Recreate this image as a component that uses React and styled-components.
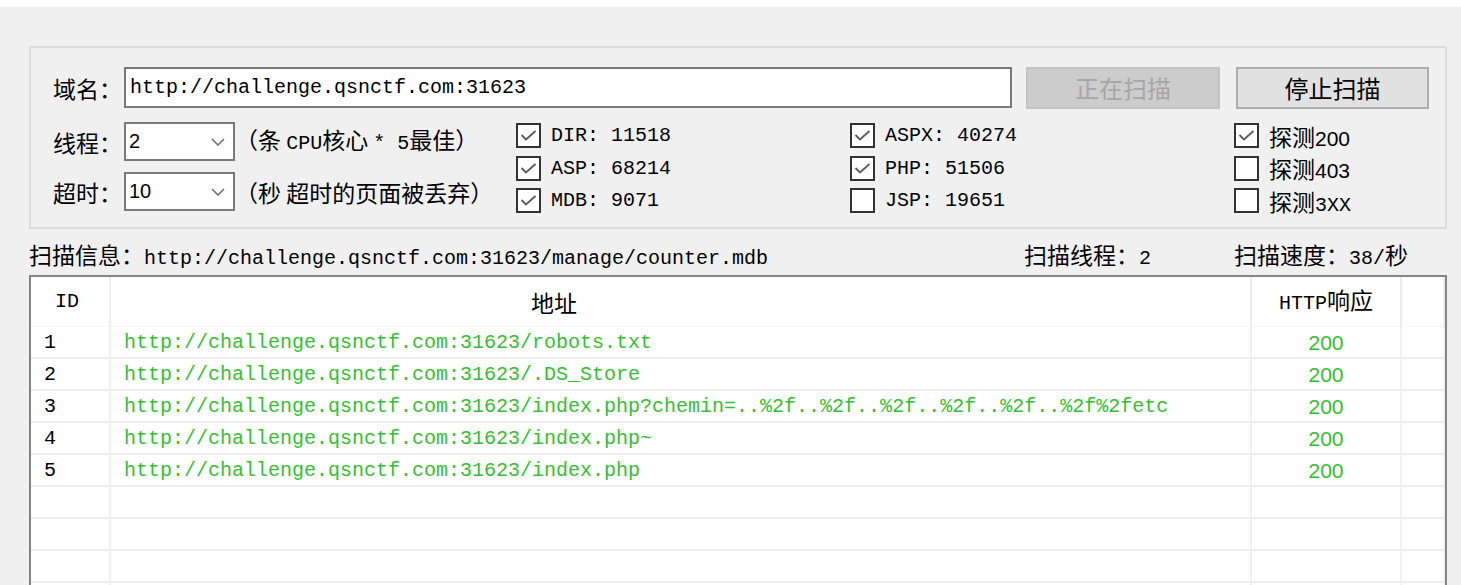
import styled, { createGlobalStyle } from "styled-components";

const GlobalStyle = createGlobalStyle`
  html, body {
    margin: 0;
    padding: 0;
    background: #f0f0f0;
  }
  body {
    font-family: "Liberation Mono", "Noto Sans CJK SC", monospace;
    font-size: 20px;
    color: #000;
  }
`;

const Window = styled.div`
  height: 585px;
  overflow: hidden;
  display: flex;
  flex-direction: column;
`;

const TitleStrip = styled.div`
  height: 7px;
  flex-shrink: 0;
  background: #fff;
`;

const Content = styled.div`
  flex: 1;
  display: flex;
  flex-direction: column;
  padding: 39px 14px 0 29px;
`;

const Zh = styled.span`
  font-family: "Noto Sans CJK SC", sans-serif;
  font-size: ${({ $size }) => $size || 23}px;
`;

const GroupBox = styled.div`
  border: 2px solid #dcdcdc;
  padding: 18px 16px 16px 22px;
  display: flex;
  flex-direction: column;
  gap: 13px;
`;

const TopRow = styled.div`
  display: flex;
  align-items: center;
  height: 43px;
`;

const Label = styled.span`
  width: 71px;
  flex-shrink: 0;
  font-family: "Noto Sans CJK SC", sans-serif;
  font-size: 23px;
  line-height: 30px;
  white-space: nowrap;
`;

const TextInput = styled.div`
  flex: 1;
  height: 41px;
  box-sizing: border-box;
  border: 2px solid #7a7a7a;
  background: #fff;
  padding-left: 4px;
  margin-right: 14px;
  display: flex;
  align-items: center;
`;

const Button = styled.div`
  width: ${({ $w }) => $w}px;
  height: 42px;
  box-sizing: border-box;
  display: flex;
  align-items: center;
  justify-content: center;
  font-family: "Noto Sans CJK SC", sans-serif;
  font-size: 24px;
  background: ${({ $disabled }) => ($disabled ? "#cccccc" : "#e1e1e1")};
  color: ${({ $disabled }) => ($disabled ? "#a6a6a6" : "#000")};
  border: 2px solid ${({ $disabled }) => ($disabled ? "#c4c4c4" : "#adadad")};
  margin-left: ${({ $ml }) => $ml || 0}px;
`;

const LowerBlock = styled.div`
  display: flex;
  height: 89px;
`;

const LeftCol = styled.div`
  width: 463px;
  flex-shrink: 0;
  display: flex;
  flex-direction: column;
  gap: 11px;
`;

const FieldRow = styled.div`
  display: flex;
  align-items: center;
  height: 39px;
`;

const Select = styled.div`
  width: 111px;
  height: 39px;
  box-sizing: border-box;
  border: 2px solid #7a7a7a;
  background: #fff;
  display: flex;
  align-items: center;
  justify-content: space-between;
  padding: 0 8px 0 3px;
  font-family: "Liberation Sans", sans-serif;
  font-size: 20px;
`;

const Hint = styled.span`
  white-space: nowrap;
  font-family: "Noto Sans CJK SC", sans-serif;
  font-size: 23px;
  line-height: 30px;
`;

const Latin = styled.span`
  font-family: "Liberation Mono", monospace;
  font-size: 20px;
`;

const Sans = styled.span`
  font-family: "Liberation Sans", sans-serif;
  font-size: 21px;
`;

const CheckCol = styled.div`
  width: ${({ $w }) => ($w ? `${$w}px` : "auto")};
  flex-shrink: 0;
  display: flex;
  flex-direction: column;
  gap: 7.5px;
  padding-top: 1px;
`;

const CheckItem = styled.div`
  display: flex;
  align-items: center;
  gap: 10px;
  height: 25px;
  white-space: nowrap;
`;

const Box = styled.span`
  width: 25px;
  height: 25px;
  box-sizing: border-box;
  border: 2px solid #333;
  background: #fff;
  display: flex;
  align-items: center;
  justify-content: center;
`;

const CheckText = styled.span`
  font-family: "Liberation Mono", monospace;
  font-size: 20px;
`;

const InfoRow = styled.div`
  display: flex;
  align-items: center;
  height: 46px;
  box-sizing: border-box;
  padding-top: 9px;
  line-height: 30px;
  white-space: nowrap;
`;

const InfoMain = styled.div`
  flex: 1;
`;

const InfoStat = styled.div`
  width: ${({ $w }) => $w}px;
`;

const Table = styled.div`
  flex: 1;
  border: 2px solid #858585;
  border-bottom: none;
  background: #fff;
  display: grid;
  grid-template-columns: 80px 1141px 150px 1fr;
  grid-auto-rows: 32px;
  grid-template-rows: 50px;
  align-content: start;
  line-height: 28px;
`;

const HeadCell = styled.div`
  display: flex;
  align-items: center;
  justify-content: ${({ $center }) => ($center ? "center" : "flex-start")};
  padding-left: ${({ $pl }) => $pl || 0}px;
  border-right: 2px solid #ececec;
  border-bottom: 1px solid #f4f4f4;
`;

const Cell = styled.div`
  display: flex;
  align-items: center;
  justify-content: ${({ $center }) => ($center ? "center" : "flex-start")};
  padding-left: ${({ $pl }) => $pl || 0}px;
  padding-top: 2px;
  border-right: 2px solid #f0f0f0;
  border-bottom: 2px solid #ededed;
  color: ${({ $green }) => ($green ? "#33bf33" : "#000")};
  font-family: ${({ $sans }) =>
    $sans ? '"Liberation Sans", sans-serif' : '"Liberation Mono", monospace'};
  font-size: ${({ $sans }) => ($sans ? 21 : 20)}px;
  white-space: nowrap;
`;

const Check = () => (
  <svg width="17" height="13" viewBox="0 0 17 13">
    <polyline
      points="1.5,6 6,10.5 15.5,2"
      fill="none"
      stroke="#5a5a5a"
      strokeWidth="1.8"
    />
  </svg>
);

const Chevron = () => (
  <svg width="14" height="8" viewBox="0 0 14 8">
    <polyline points="1,1 7,7 13,1" fill="none" stroke="#6a6a6a" strokeWidth="1.5" />
  </svg>
);

const CheckBox = ({ checked, children }) => (
  <CheckItem>
    <Box>{checked && <Check />}</Box>
    {children}
  </CheckItem>
);

const host = "http://challenge.qsnctf.com:31623";

const results = [
  { id: 1, url: `${host}/robots.txt`, code: 200 },
  { id: 2, url: `${host}/.DS_Store`, code: 200 },
  {
    id: 3,
    url: `${host}/index.php?chemin=..%2f..%2f..%2f..%2f..%2f..%2f%2fetc`,
    code: 200,
  },
  { id: 4, url: `${host}/index.php~`, code: 200 },
  { id: 5, url: `${host}/index.php`, code: 200 },
];

const emptyRows = [0, 1, 2, 3, 4];

export default function App() {
  return (
    <>
      <GlobalStyle />
      <Window>
        <TitleStrip />
        <Content>
          <GroupBox>
            <TopRow>
              <Label>域名：</Label>
              <TextInput>
                <Latin>{host}</Latin>
              </TextInput>
              <Button $w={194} $disabled>
                正在扫描
              </Button>
              <Button $w={193} $ml={16}>
                停止扫描
              </Button>
            </TopRow>
            <LowerBlock>
              <LeftCol>
                <FieldRow>
                  <Label>线程：</Label>
                  <Select>
                    <span>2</span>
                    <Chevron />
                  </Select>
                  <Hint>
                    （条 <Latin>CPU</Latin>核心 <Latin>* 5</Latin>最佳）
                  </Hint>
                </FieldRow>
                <FieldRow>
                  <Label>超时：</Label>
                  <Select>
                    <span>10</span>
                    <Chevron />
                  </Select>
                  <Hint>（秒 超时的页面被丢弃）</Hint>
                </FieldRow>
              </LeftCol>
              <CheckCol $w={334}>
                <CheckBox checked>
                  <CheckText>DIR: 11518</CheckText>
                </CheckBox>
                <CheckBox checked>
                  <CheckText>ASP: 68214</CheckText>
                </CheckBox>
                <CheckBox checked>
                  <CheckText>MDB: 9071</CheckText>
                </CheckBox>
              </CheckCol>
              <CheckCol $w={384}>
                <CheckBox checked>
                  <CheckText>ASPX: 40274</CheckText>
                </CheckBox>
                <CheckBox checked>
                  <CheckText>PHP: 51506</CheckText>
                </CheckBox>
                <CheckBox>
                  <CheckText>JSP: 19651</CheckText>
                </CheckBox>
              </CheckCol>
              <CheckCol>
                <CheckBox checked>
                  <span>
                    <Zh>探测</Zh>
                    <Sans>200</Sans>
                  </span>
                </CheckBox>
                <CheckBox>
                  <span>
                    <Zh>探测</Zh>
                    <Sans>403</Sans>
                  </span>
                </CheckBox>
                <CheckBox>
                  <span>
                    <Zh>探测</Zh>
                    <Latin>3XX</Latin>
                  </span>
                </CheckBox>
              </CheckCol>
            </LowerBlock>
          </GroupBox>

          <InfoRow>
            <InfoMain>
              <Zh>扫描信息：</Zh>
              <Latin>{host}/manage/counter.mdb</Latin>
            </InfoMain>
            <InfoStat $w={210}>
              <Zh>扫描线程：</Zh>
              <Latin>2</Latin>
            </InfoStat>
            <InfoStat $w={213}>
              <Zh>扫描速度：</Zh>
              <Latin>38/</Latin>
              <Zh>秒</Zh>
            </InfoStat>
          </InfoRow>

          <Table>
            <HeadCell $pl={24}>ID</HeadCell>
            <HeadCell $pl={420}>
              <Zh>地址</Zh>
            </HeadCell>
            <HeadCell $center>
              <span>
                <Latin>HTTP</Latin>
                <Zh>响应</Zh>
              </span>
            </HeadCell>
            <HeadCell />
            {results.map((r) => (
              <>
                <Cell key={`id${r.id}`} $pl={13}>
                  {r.id}
                </Cell>
                <Cell key={`u${r.id}`} $pl={13} $green>
                  {r.url}
                </Cell>
                <Cell key={`c${r.id}`} $center $green $sans>
                  {r.code}
                </Cell>
                <Cell key={`e${r.id}`} />
              </>
            ))}
            {emptyRows.map((i) => (
              <>
                <Cell key={`a${i}`} />
                <Cell key={`b${i}`} />
                <Cell key={`c${i}`} />
                <Cell key={`d${i}`} />
              </>
            ))}
          </Table>
        </Content>
      </Window>
    </>
  );
}
